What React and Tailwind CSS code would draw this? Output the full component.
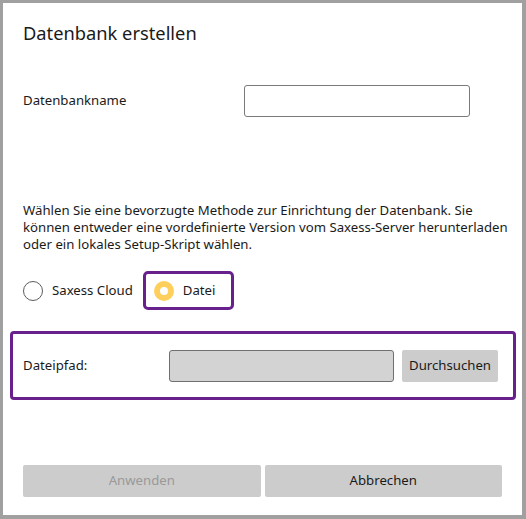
import React, { useState } from 'react';

const font = { fontFamily: '"Noto Sans", "Open Sans", sans-serif' };

const Radio = ({ checked, label, onClick }) => (
  <button type="button" onClick={onClick} className="flex items-center gap-[9px] text-[13.2px] text-[#1a1a1a]">
    {checked ? (
      <span className="w-[20px] h-[20px] rounded-full bg-[#ffcf5c] flex items-center justify-center">
        <span className="w-[8px] h-[8px] rounded-full bg-white" />
      </span>
    ) : (
      <span className="w-[20px] h-[20px] rounded-full border border-[#5c5c5c] bg-white" />
    )}
    <span>{label}</span>
  </button>
);

export default function App() {
  const [method, setMethod] = useState('file');
  const [name, setName] = useState('');

  return (
    <div className="w-[526px] h-[519px] bg-[#a0a0a0] pt-[3px] pl-[3px] pr-[4px] pb-[4px]" style={font}>
      <div className="h-full bg-white flex flex-col">
        {/* Header */}
        <h1 className="mt-[16px] ml-[20px] text-[18.3px] leading-[28px] text-[#1a1a1a] font-normal">Datenbank erstellen</h1>

        {/* Name row */}
        <div className="mt-[38px] ml-[20px] flex items-center">
          <label className="w-[221px] text-[13.2px] text-[#1a1a1a]">Datenbankname</label>
          <input
            value={name}
            onChange={(e) => setName(e.target.value)}
            className="w-[226px] h-[32px] rounded-[3px] border border-[#7a7a7a] bg-white px-2 text-[13.2px] outline-none"
          />
        </div>

        {/* Description */}
        <p className="mt-[85px] ml-[20px] text-[13.2px] leading-[17px] text-[#1a1a1a] whitespace-nowrap">
          Wählen Sie eine bevorzugte Methode zur Einrichtung der Datenbank. Sie<br />
          können entweder eine vordefinierte Version vom Saxess-Server herunterladen<br />
          oder ein lokales Setup-Skript wählen.
        </p>

        {/* Method */}
        <div className="mt-[18px] ml-[20px] flex items-center">
          <Radio checked={method === 'cloud'} label="Saxess Cloud" onClick={() => setMethod('cloud')} />
          <div className="ml-[10px] w-[91px] h-[39px] rounded-[5px] border-[3px] border-[#68218c] flex items-center pl-[8px]">
            <Radio checked={method === 'file'} label="Datei" onClick={() => setMethod('file')} />
          </div>
        </div>

        {/* File path */}
        <div className="mt-[21px] ml-[7px] mr-[6px] h-[69px] rounded-[4px] border-[3px] border-[#68218c] flex items-center pl-[10px] pr-[15px]">
          <span className="w-[146px] text-[13.2px] text-[#1a1a1a]">Dateipfad:</span>
          <div className="w-[225px] h-[32px] rounded-[3px] border border-[#707070] bg-[#d3d3d3]" />
          <button type="button" className="ml-[8px] w-[96px] h-[32px] rounded-[2px] bg-[#cccccc] text-[13.2px] text-[#1a1a1a]">Durchsuchen</button>
        </div>

        {/* Footer */}
        <div className="mt-auto mb-[18px] mx-[20px] flex gap-[4px]">
          <button type="button" disabled className="flex-1 h-[32px] rounded-[2px] bg-[#cccccc] text-[13.2px] text-[#999999]">Anwenden</button>
          <button type="button" className="flex-1 h-[32px] rounded-[2px] bg-[#cccccc] text-[13.2px] text-[#1a1a1a]">Abbrechen</button>
        </div>
      </div>
    </div>
  );
}
